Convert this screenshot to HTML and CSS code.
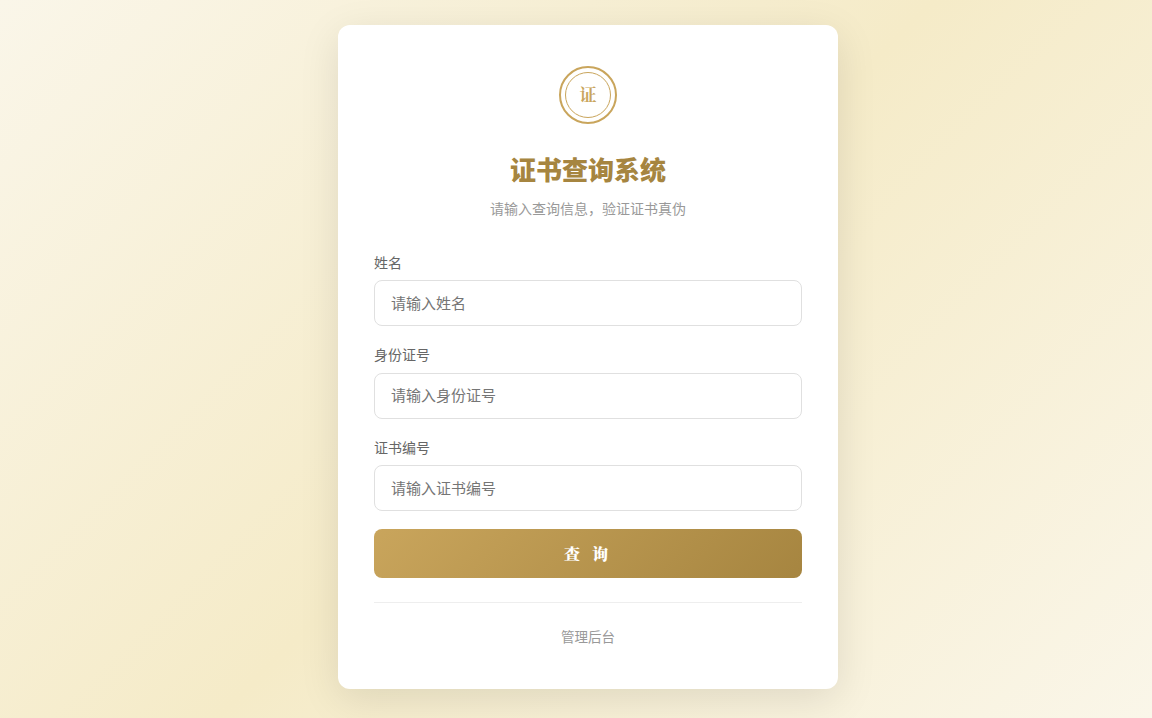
FILE: index.html
```html
<!DOCTYPE html>
<html lang="zh-CN">
<head>
<meta charset="utf-8">
<title>证书查询系统</title>
<link rel="stylesheet" href="styles.css">
</head>
<body>
<main class="card">
  <div class="seal"><div class="seal-inner">证</div></div>
  <h1 class="title">证书查询系统</h1>
  <p class="subtitle">请输入查询信息，验证证书真伪</p>
  <form class="form">
    <div class="field">
      <label class="label">姓名</label>
      <input class="input" placeholder="请输入姓名">
    </div>
    <div class="field">
      <label class="label">身份证号</label>
      <input class="input" placeholder="请输入身份证号">
    </div>
    <div class="field">
      <label class="label">证书编号</label>
      <input class="input" placeholder="请输入证书编号">
    </div>
    <button class="submit" type="button">查 询</button>
  </form>
  <div class="footer"><a class="admin">管理后台</a></div>
</main>
</body>
</html>
```
FILE: styles.css
```css
* { box-sizing: border-box; }
html, body { height: 100%; }
body {
  margin: 0;
  height: 718px;
  overflow: hidden;
  display: flex;
  justify-content: center;
  align-items: flex-start;
  padding: 25px 0 0 24px;
  background: linear-gradient(135deg, #faf6e9 0%, #f5ebc8 50%, #faf6e9 100%);
  font-family: "Liberation Sans", "Noto Sans CJK SC", sans-serif;
}
.card {
  width: 500px;
  height: 664px;
  background: #fff;
  border-radius: 12px;
  padding: 41px 36px 0;
  box-shadow: 0 10px 40px rgba(0, 0, 0, 0.1);
}
.seal {
  width: 58px;
  height: 58px;
  margin: 0 auto 30px;
  border: 2px solid #c9a55c;
  border-radius: 50%;
  display: flex;
  align-items: center;
  justify-content: center;
}
.seal-inner {
  width: 46px;
  height: 46px;
  padding-bottom: 3px;
  border: 1px solid #c9a55c;
  border-radius: 50%;
  display: flex;
  align-items: center;
  justify-content: center;
  color: #c9a55c;
  font-size: 17px;
  font-weight: 700;
  font-family: "Noto Serif CJK SC", "Noto Sans CJK SC", serif;
}
.title {
  margin: 0;
  text-align: center;
  font-size: 26px;
  line-height: 34px;
  font-weight: 900;
  color: #a68540;
}
.subtitle {
  margin: 11px 0 0;
  text-align: center;
  font-size: 14px;
  line-height: 20px;
  color: #999;
}
.form { margin-top: 32.9px; }
.field { margin-bottom: 18px; }
.label {
  display: block;
  font-size: 14px;
  line-height: 22.4px;
  color: #666;
  margin-bottom: 6px;
}
.input {
  display: block;
  width: 100%;
  height: 46px;
  padding: 0 16px;
  border: 1px solid #e0e0e0;
  border-radius: 8px;
  font-size: 15px;
  font-family: inherit;
  background: #fff;
}
.input::placeholder { color: #757575; opacity: 1; }
.submit {
  display: block;
  width: 100%;
  height: 49px;
  border: 0;
  border-radius: 8px;
  background: linear-gradient(135deg, #c9a55c 0%, #a68540 100%);
  color: #fff;
  font-size: 16px;
  font-weight: 900;
  font-family: "Noto Serif CJK SC", "Noto Sans CJK SC", serif;
  letter-spacing: 4px;
  white-space: pre;
}
.footer {
  margin-top: 24px;
  border-top: 1px solid #eee;
  padding-top: 24.5px;
  text-align: center;
}
.admin {
  font-size: 13.5px;
  line-height: 20px;
  color: #999;
}
```
